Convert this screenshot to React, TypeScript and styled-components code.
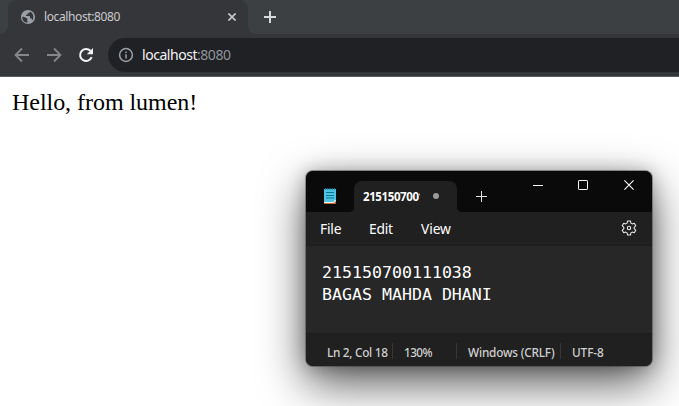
import React from "react";
import styled, { createGlobalStyle } from "styled-components";

const GlobalStyle = createGlobalStyle`
  * { box-sizing: border-box; }
  html, body, #root { height: 100%; margin: 0; }
  body { overflow: hidden; background: #fff; }
`;

const Browser = styled.div`
  height: 406px;
  width: 679px;
  display: flex;
  flex-direction: column;
  position: relative;
  overflow: hidden;
  font-family: "Noto Sans", "Open Sans", sans-serif;
`;

const TabStrip = styled.div`
  height: 34px;
  display: flex;
  padding-left: 8px;
  background: #3c4043;
`;

const BrowserTab = styled.div`
  position: relative;
  width: 240px;
  display: flex;
  align-items: center;
  padding: 0 12px;
  background: #35363a;
  border-radius: 8px 8px 0 0;
  &::before, &::after {
    content: "";
    position: absolute;
    bottom: 0;
    width: 8px;
    height: 8px;
  }
  &::before {
    left: -8px;
    background: radial-gradient(circle at 0 0, transparent 7.5px, #35363a 8px);
  }
  &::after {
    right: -8px;
    background: radial-gradient(circle at 100% 0, transparent 7.5px, #35363a 8px);
  }
`;

const Label = styled.span<{ $size: number; $color: string; $spacing?: number; $weight?: number }>`
  font-size: ${(p) => p.$size}px;
  color: ${(p) => p.$color};
  letter-spacing: ${(p) => p.$spacing ?? 0}px;
  font-weight: ${(p) => p.$weight ?? 400};
  line-height: 18px;
  white-space: nowrap;
`;

const TabTitle = styled(Label)`
  margin-left: 8px;
  flex: 1;
`;

const NewTab = styled.div`
  width: 44px;
  display: grid;
  place-items: center;
`;

const Toolbar = styled.div`
  height: 43px;
  display: flex;
  align-items: center;
  background: #35363a;
  border-bottom: 1px solid #5a595d;
  padding-left: 14px;
`;

const NavButtons = styled.div`
  display: flex;
  gap: 16px;
  margin-right: 14px;
`;

const AddressBar = styled.div`
  flex: 1;
  height: 34px;
  display: flex;
  align-items: center;
  padding-left: 10px;
  gap: 8px;
  background: #202124;
  border-radius: 17px 0 0 17px;
`;

const Url = styled.div`
  padding-bottom: 2px;
`;

const Page = styled.main`
  flex: 1;
  padding: 11px 12px;
  background: #fff;
  color: #000;
  font: 24px/29px "Liberation Serif", serif;
  letter-spacing: -0.04px;
`;

const Notepad = styled.section`
  position: absolute;
  left: 306px;
  top: 171px;
  width: 346px;
  height: 195px;
  display: flex;
  flex-direction: column;
  border-radius: 7px;
  background: #272727;
  box-shadow: 0 0 0 1px rgba(60, 60, 60, 0.45), 0 17px 46px rgba(0, 0, 0, 0.66), 0 1px 18px rgba(0, 0, 0, 0.28);
`;

const TitleBar = styled.header`
  height: 41px;
  display: flex;
  align-items: flex-end;
  padding-left: 16px;
  background: #0a0a0a;
  border-radius: 7px 7px 0 0;
`;

const AppIcon = styled.div`
  width: 16px;
  height: 25px;
`;

const NoteTab = styled.div`
  position: relative;
  width: 103px;
  height: 31px;
  margin-left: 16px;
  display: flex;
  align-items: center;
  padding: 1px 18px 0 9px;
  background: #202020;
  border-radius: 8px 8px 0 0;
  &::before, &::after {
    content: "";
    position: absolute;
    bottom: 0;
    width: 4px;
    height: 4px;
  }
  &::before {
    left: -4px;
    background: radial-gradient(circle at 0 0, transparent 3.5px, #202020 4px);
  }
  &::after {
    right: -4px;
    background: radial-gradient(circle at 100% 0, transparent 3.5px, #202020 4px);
  }
`;

const NoteTitle = styled(Label)`
  width: 57px;
  overflow: hidden;
`;

const UnsavedDot = styled.span`
  width: 6px;
  height: 6px;
  margin-left: auto;
  margin-bottom: 2px;
  border-radius: 50%;
  background: #9b9b9b;
`;

const AddNote = styled.div`
  width: 49px;
  height: 31px;
  display: grid;
  place-items: center;
`;

const WindowControls = styled.div`
  height: 28px;
  display: flex;
  align-self: flex-start;
  align-items: center;
  margin-left: auto;
  padding-right: 18px;
  svg { display: block; }
  svg + svg { margin-left: 35px; }
  svg:last-child { margin-left: 36px; }
`;

const MenuBar = styled.nav`
  height: 34px;
  display: flex;
  align-items: center;
  padding: 0 15px 0 14px;
  background: #202020;
  border-bottom: 1px solid #1d1d1d;
`;

const MenuItem = styled(Label)<{ $width: number }>`
  width: ${(p) => p.$width}px;
  padding-top: 1px;
`;

const Settings = styled.div`
  margin-left: auto;
  display: flex;
  padding-bottom: 1px;
`;

const Editor = styled.pre`
  flex: 1;
  margin: 0;
  padding: 16px 16px;
  color: #fff;
  font: 16.6px/22px "DejaVu Sans Mono", monospace;
`;

const StatusBar = styled.footer`
  height: 33px;
  display: flex;
  align-items: center;
  padding: 2px 0 0 10px;
  background: #202020;
  border-top: 1px solid #1d1d1d;
  border-radius: 0 0 7px 7px;
`;

const StatusCell = styled.div<{ $width: number; $last?: boolean }>`
  width: ${(p) => p.$width}px;
  height: 16px;
  display: flex;
  align-items: center;
  padding: 2px 0 0 11px;
  border-right: ${(p) => (p.$last ? "0" : "1px solid #363636")};
`;

const GlobeIcon = () => (
  <svg width="16" height="16" viewBox="0 0 16 16">
    <circle cx="8" cy="8" r="7.1" fill="#9aa0a6" />
    <path d="M2.4 7.4 L5.3 8.4 L7.2 9.6 V11 L7.6 13.6 C4 13.6 1.9 10.9 2.4 7.4Z" fill="#35363a" />
    <path d="M9.8 2.5 C9.8 4 9 4.2 7.5 4.2 V5.7 H6 V7.1 H10 V9.2 H11.4 L12.4 11.4 C14.3 8.6 13.5 3.8 9.8 2.5Z" fill="#35363a" />
  </svg>
);

const ArrowIcon = ({ forward = false }: { forward?: boolean }) => (
  <svg width="16" height="16" viewBox="0 0 16 16" fill="none" stroke="#85878b" strokeWidth="1.8">
    <path d={forward ? "M1 8H14M8 1.5L14.5 8L8 14.5" : "M15 8H2M8 1.5L1.5 8L8 14.5"} />
  </svg>
);

const ReloadIcon = () => (
  <svg width="16" height="16" viewBox="0 0 16 16">
    <path d="M13.7 10.2A6 6 0 1 1 12.4 3.8" fill="none" stroke="#f1f3f4" strokeWidth="2" />
    <path d="M15 1V7.2H8.8Z" fill="#f1f3f4" />
  </svg>
);

const InfoIcon = () => (
  <svg width="16" height="16" viewBox="0 0 16 16" fill="none" stroke="#9aa0a6" strokeWidth="1.5">
    <circle cx="8" cy="8" r="6.4" />
    <path d="M8 7.2V11.5M8 4.4V6" />
  </svg>
);

const PlusIcon = ({ size, weight, color }: { size: number; weight: number; color: string }) => (
  <svg width={size} height={size} viewBox={`0 0 ${size} ${size}`} stroke={color} strokeWidth={weight}>
    <path d={`M0 ${size / 2}H${size}M${size / 2} 0V${size}`} />
  </svg>
);

const CloseIcon = ({ size, weight, color }: { size: number; weight: number; color: string }) => (
  <svg width={size} height={size} viewBox="0 0 10 10" stroke={color} strokeWidth={weight}>
    <path d="M.4 .4L9.6 9.6M9.6 .4L.4 9.6" />
  </svg>
);

const NotepadIcon = () => (
  <svg width="16" height="20" viewBox="0 0 16 20">
    <path d="M2 14H14V16.2Q14 17 13.2 17H2.8Q2 17 2 16.2Z" fill="#c56a2c" />
    <path d="M2 13H14V14L12 16H2Z" fill="#f3efe9" />
    <path d="M2 2H14V13L12 15H2Z" fill="#50c3e3" />
    <path d="M12 15V13H14Z" fill="#c7eef8" />
    <path d="M3.5 1V3M5.7 1V3M8 1V3M10.3 1V3M12.5 1V3" stroke="#1684a5" />
    <path d="M4 5.5H12M4 8.5H12M4 11H12" stroke="#087596" />
  </svg>
);

const GearIcon = () => (
  <svg width="16" height="16" viewBox="0 0 16 16" fill="none" stroke="#e8e8e8" strokeWidth="1.1" strokeLinejoin="round">
    <path d="M6.6 1H9.4L9.9 3.1L11.2 3.9L13.3 3.2L14.8 5.7L13.2 7.3V8.7L14.8 10.3L13.3 12.8L11.2 12.1L9.9 12.9L9.4 15H6.6L6.1 12.9L4.8 12.1L2.7 12.8L1.2 10.3L2.8 8.7V7.3L1.2 5.7L2.7 3.2L4.8 3.9L6.1 3.1Z" />
    <circle cx="8" cy="8" r="1.7" />
  </svg>
);

const statusItems = [
  { text: "Ln 2, Col 18", width: 77, spacing: -0.3 },
  { text: "130%", width: 64, spacing: -0.6 },
  { text: "Windows (CRLF)", width: 104, spacing: -0.2 },
  { text: "UTF-8", width: 70, spacing: -0.1 },
];

export default function App() {
  return (
    <>
      <GlobalStyle />
      <Browser>
        <TabStrip>
          <BrowserTab>
            <GlobeIcon />
            <TabTitle $size={12} $color="#c9cbce" $spacing={-0.38}>localhost:8080</TabTitle>
            <CloseIcon size={8} weight={2} color="#c5c7ca" />
          </BrowserTab>
          <NewTab><PlusIcon size={12} weight={2} color="#d7d9db" /></NewTab>
        </TabStrip>
        <Toolbar>
          <NavButtons>
            <ArrowIcon />
            <ArrowIcon forward />
            <ReloadIcon />
          </NavButtons>
          <AddressBar>
            <InfoIcon />
            <Url>
              <Label $size={14} $color="#f1f3f4" $spacing={-0.46}>localhost</Label>
              <Label $size={14} $color="#8f949a" $spacing={-0.46}>:8080</Label>
            </Url>
          </AddressBar>
        </Toolbar>
        <Page>Hello, from lumen!</Page>

        <Notepad>
          <TitleBar>
            <AppIcon><NotepadIcon /></AppIcon>
            <NoteTab>
              <NoteTitle $size={11.5} $color="#fff" $weight={700} $spacing={-0.4}>215150700111038</NoteTitle>
              <UnsavedDot />
            </NoteTab>
            <AddNote><PlusIcon size={11} weight={1} color="#e4e4e4" /></AddNote>
            <WindowControls>
              <svg width="10" height="10" stroke="#fff"><path d="M0 5.5H10" /></svg>
              <svg width="10" height="10" stroke="#fff" fill="none"><rect x=".5" y=".5" width="9" height="9" rx=".6" /></svg>
              <CloseIcon size={10} weight={1.1} color="#fff" />
            </WindowControls>
          </TitleBar>
          <MenuBar>
            <MenuItem $size={13.8} $color="#fff" $width={49} $spacing={-0.2}>File</MenuItem>
            <MenuItem $size={13.8} $color="#fff" $width={52} $spacing={-0.2}>Edit</MenuItem>
            <MenuItem $size={13.8} $color="#fff" $width={50} $spacing={-0.1}>View</MenuItem>
            <Settings><GearIcon /></Settings>
          </MenuBar>
          <Editor>{"215150700111038\nBAGAS MAHDA DHANI"}</Editor>
          <StatusBar>
            {statusItems.map((item, i) => (
              <StatusCell key={item.text} $width={item.width} $last={i === statusItems.length - 1}>
                <Label $size={11.8} $color="#cfcfcf" $weight={500} $spacing={item.spacing}>{item.text}</Label>
              </StatusCell>
            ))}
          </StatusBar>
        </Notepad>
      </Browser>
    </>
  );
}
